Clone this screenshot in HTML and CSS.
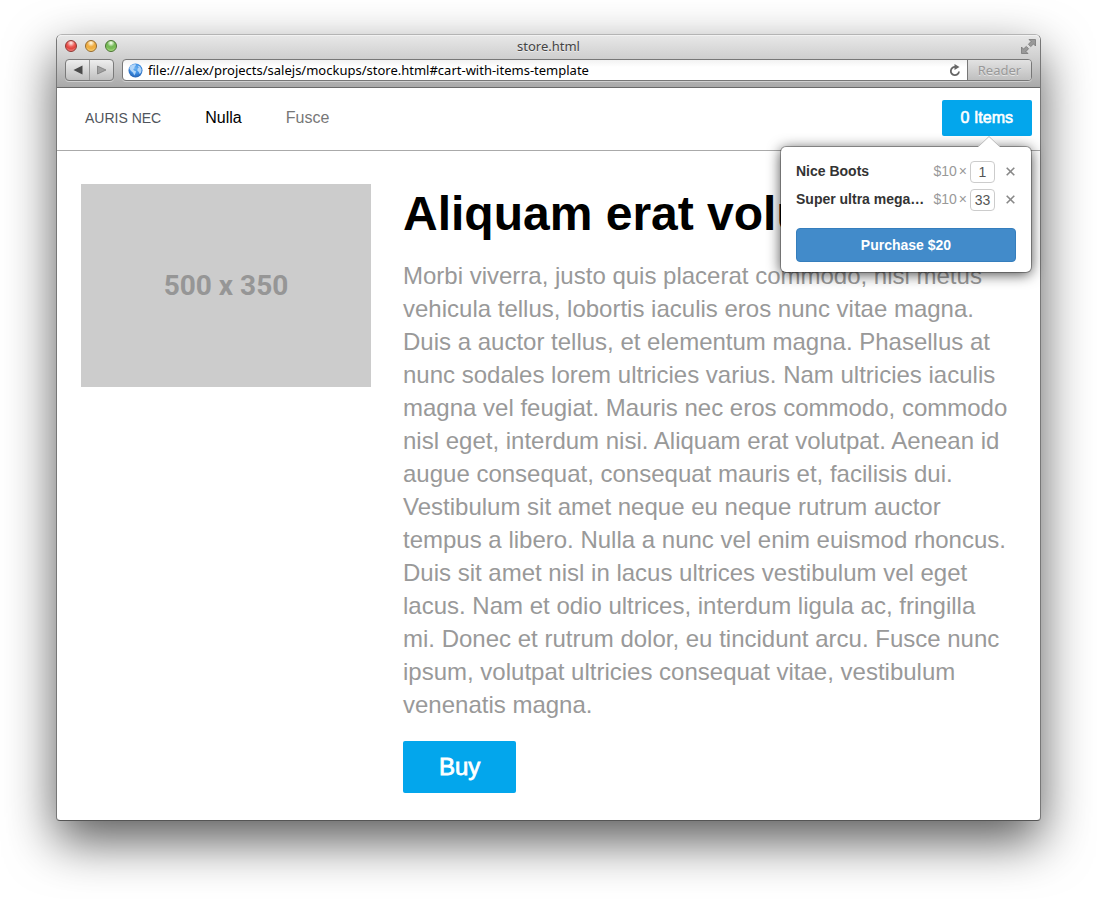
FILE: index.html
```html
<!DOCTYPE html>
<html lang="en">
<head>
<meta charset="utf-8">
<title>store.html</title>
<link rel="stylesheet" href="styles.css">
</head>
<body>
<div class="window">
  <div class="chrome">
    <div class="titlebar">
      <div class="lights">
        <button class="light light-red" aria-label="Close"></button>
        <button class="light light-yellow" aria-label="Minimize"></button>
        <button class="light light-green" aria-label="Zoom"></button>
      </div>
      <div class="window-title">store.html</div>
      <button class="fullscreen" aria-label="Full screen">
        <svg width="15" height="15" viewBox="0 0 15 15"><path d="M8 0.500h6.500v6.500l-2-2L9.700 7.600 7.400 5.300 10 2.500zM7 14.500H0.500V8l2 2L5.300 7.400l2.300 2.300L5 12.500z" fill="#999" stroke="#707070" stroke-width="0.700"/></svg>
      </button>
    </div>
    <div class="toolbar">
      <div class="history">
        <button aria-label="Back"><svg width="10" height="10" viewBox="0 0 10 10"><path d="M0.500 5L9.500 0.500v9z" fill="#4a4a4a"/></svg></button>
        <button aria-label="Forward"><svg width="10" height="10" viewBox="0 0 10 10"><path d="M9 5L0.500 1v8z" fill="#a0a0a0" stroke="#757575" stroke-width="0.700"/></svg></button>
      </div>
      <div class="address">
        <svg class="globe" width="15" height="15" viewBox="0 0 15 15">
          <defs><radialGradient id="sea" cx="50%" cy="35%" r="65%"><stop offset="0" stop-color="#6ab2f2"/><stop offset="0.600" stop-color="#3a8ae0"/><stop offset="1" stop-color="#2560b0"/></radialGradient></defs>
          <circle cx="7.500" cy="7.500" r="7" fill="url(#sea)"/>
          <path d="M2 3.500C4 1 6.500 0.800 8 1.500L7.500 3 6.300 4l.5 1.300-1.600.8.8 1.500 2 .7-.4 1.800-1.300 2.400-1.200-2.700-2.300-2L1.300 5.500zM9.500 2.500l2.500 1 1.600 3-.4 3-1.600 1.500-.8-2-1.500-1.600.3-2 1.200-.7z" fill="#d5ebff" opacity="0.750"/>
        </svg>
        <input class="url" aria-label="Address" value="file:///alex/projects/salejs/mockups/store.html#cart-with-items-template">
        <button class="reload" aria-label="Reload"><svg width="12" height="13" viewBox="0 0 12 13"><path d="M6.500 3A4.100 4.100 0 1 0 10 7.500" fill="none" stroke="#666" stroke-width="1.800"/><path d="M5.500 0l5 3-5 3z" fill="#666"/></svg></button>
        <button class="reader" disabled>Reader</button>
      </div>
    </div>
  </div>
  <header class="site-header">
    <nav class="site-nav">
      <a class="brand" href="#">AURIS NEC</a>
      <a class="current" href="#">Nulla</a>
      <a href="#">Fusce</a>
    </nav>
    <div class="cart">
      <button class="cart-toggle">0 Items</button>
      <div class="popover">
        <svg class="arrow" width="22" height="12" viewBox="0 0 22 12"><path d="M0 11L11 0.500 22 11V12H0z" fill="#fff"/><path d="M0.500 10.500L11 0.500 21.500 10.500" fill="none" stroke="#bbb"/></svg>
        <div class="cart-row">
          <span class="name">Nice Boots</span><span class="price">$10</span><span class="times">×</span>
          <input class="qty" aria-label="Quantity of Nice Boots" value="1">
          <button class="remove" aria-label="Remove Nice Boots"><svg width="9" height="9" viewBox="0 0 9 9"><path d="M0.700 0.700l7.600 7.600M8.300 0.700L0.700 8.300" stroke="#888" stroke-width="1.600"/></svg></button>
        </div>
        <div class="cart-row">
          <span class="name">Super ultra mega…</span><span class="price">$10</span><span class="times">×</span>
          <input class="qty" aria-label="Quantity of Super ultra mega" value="33">
          <button class="remove" aria-label="Remove Super ultra mega"><svg width="9" height="9" viewBox="0 0 9 9"><path d="M0.700 0.700l7.600 7.600M8.300 0.700L0.700 8.300" stroke="#888" stroke-width="1.600"/></svg></button>
        </div>
        <button class="purchase">Purchase $20</button>
      </div>
    </div>
  </header>
  <main class="product">
    <div class="placeholder">500 x 350</div>
    <section class="details">
      <h1>Aliquam erat volutpat</h1>
      <p>Morbi viverra, justo quis placerat commodo, nisl metus vehicula tellus, lobortis iaculis eros nunc vitae magna. Duis a auctor tellus, et elementum magna. Phasellus at nunc sodales lorem ultricies varius. Nam ultricies iaculis magna vel feugiat. Mauris nec eros commodo, commodo nisl eget, interdum nisi. Aliquam erat volutpat. Aenean id augue consequat, consequat mauris et, facilisis dui. Vestibulum sit amet neque eu neque rutrum auctor tempus a libero. Nulla a nunc vel enim euismod rhoncus. Duis sit amet nisl in lacus ultrices vestibulum vel eget lacus. Nam et odio ultrices, interdum ligula ac, fringilla mi. Donec et rutrum dolor, eu tincidunt arcu. Fusce nunc ipsum, volutpat ultricies consequat vitae, vestibulum venenatis magna.</p>
      <button class="buy">Buy</button>
    </section>
  </main>
</div>
</body>
</html>
```
FILE: styles.css
```css
* { box-sizing: border-box; }
body {
  margin: 0;
  padding: 34px 56px 78px;
  background: #fff;
  font-family: "Liberation Sans", Arial, sans-serif;
  overflow: hidden;
}
button, input { font-family: inherit; margin: 0; padding: 0; border: 0; background: none; }
svg { display: block; }
a { text-decoration: none; color: inherit; }

.window {
  border: 1px solid #777;
  border-top-color: #b4b4b4;
  border-bottom-color: #555;
  border-radius: 6px 6px 4px 4px;
  background: #fff;
  box-shadow: 0 20px 50px rgba(0, 0, 0, 0.65);
}

/* Browser chrome */
.chrome {
  height: 53px;
  padding: 0 8px;
  border-bottom: 1px solid #6a6a6a;
  border-radius: 5px 5px 0 0;
  background: linear-gradient(#e8e8e8, #cfcfcf 45%, #a9a9a9);
  box-shadow: inset 0 1px #f2f2f2;
  font-family: "Noto Sans", sans-serif;
}
.titlebar {
  display: grid;
  grid-template-columns: 1fr auto 1fr;
  align-items: center;
  height: 24px;
  padding-bottom: 2px;
}
.lights { display: flex; gap: 8px; }
.light { width: 12px; height: 12px; border-radius: 50%; border: 1px solid; }
.light-red { border-color: #8e3531; background: radial-gradient(circle at 50% 20%, #fbd5d3 0 8%, #ee5c57 40%, #e04540 60%, #ffaaa5); }
.light-yellow { border-color: #96692a; background: radial-gradient(circle at 50% 20%, #fdeecb 0 8%, #efad43 40%, #f0af42 60%, #ffec9c); }
.light-green { border-color: #47722f; background: radial-gradient(circle at 50% 20%, #e4f6d8 0 8%, #74b956 40%, #7abe57 60%, #ccf5a6); }
.window-title { font-size: 13px; line-height: 22px; color: #444; text-shadow: 0 1px #eee; }
.fullscreen { justify-self: end; margin-right: -4px; }
.toolbar { display: flex; gap: 8px; height: 22px; }
.history {
  display: flex;
  width: 49px;
  border: 1px solid #7a7a7a;
  border-radius: 4px;
  background: linear-gradient(#eee, #c0c0c0);
  box-shadow: 0 1px #d0d0d0;
}
.history button { flex: 1; display: grid; place-items: center; }
.history button + button { border-left: 1px solid #999; }
.address {
  flex: 1;
  display: flex;
  align-items: center;
  border: 1px solid #777;
  border-radius: 4px;
  background: linear-gradient(#f2f2f2, #fff 35%);
  box-shadow: 0 1px #d0d0d0;
}
.globe { margin: 0 5px; }
.url { flex: 1; min-width: 0; height: 20px; font-size: 13px; color: #000; outline: 0; }
.reload { margin-right: 6px; }
.reader {
  align-self: stretch;
  width: 64px;
  border-left: 1px solid #777;
  border-radius: 0 3px 3px 0;
  background: linear-gradient(#e2e2e2, #bfbfbf);
  font-size: 13px;
  line-height: 18px;
  color: #999;
  text-shadow: 0 1px #e5e5e5;
}

/* Store page */
.site-header {
  display: flex;
  justify-content: space-between;
  align-items: center;
  height: 63px;
  padding: 0 8px 3px 28px;
  border-bottom: 1px solid #aaa;
}
.site-nav { display: flex; align-items: baseline; gap: 44px; font-size: 16px; line-height: 20px; color: #777; }
.site-nav .brand { font-size: 14px; color: #50555c; }
.site-nav .current { color: #000; }
.cart { position: relative; }
.cart-toggle {
  display: block;
  height: 36px;
  padding: 0 19px;
  border-radius: 2px;
  background: #03a6ec;
  color: #fff;
  font-size: 16px;
  -webkit-text-stroke: 0.6px #fff;
}
.popover {
  position: absolute;
  z-index: 1;
  top: 47px;
  right: 1px;
  width: 250px;
  padding: 14px 15px 10px;
  border-radius: 5px;
  background: #fff;
  box-shadow: 0 0 0 1px rgba(0, 0, 0, 0.3), 0 2px 14px rgba(0, 0, 0, 0.75);
}
.arrow { position: absolute; top: -11px; right: 31px; }
.cart-row { display: flex; align-items: center; height: 22px; margin-bottom: 6px; font-size: 14px; line-height: 16px; color: #999; }
.name { flex: 1; font-weight: bold; color: #333; white-space: nowrap; }
.price { margin-right: 2px; }
.times { margin-right: 3px; }
.name, .price, .times { padding-bottom: 2px; }
.qty {
  width: 25px;
  height: 22px;
  border: 1px solid #ccc;
  border-radius: 4px;
  background: #fff;
  font-size: 14px;
  text-align: center;
  color: #555;
}
.remove { margin: 0 1px 0 11px; }
.purchase {
  display: block;
  width: 100%;
  height: 34px;
  margin-top: 17px;
  border: 1px solid #357ebd;
  border-radius: 4px;
  background: #428bca;
  color: #fff;
  font-size: 14px;
  font-weight: bold;
}
.product {
  display: grid;
  grid-template-columns: 290fr 613fr;
  gap: 32px;
  align-items: start;
  padding: 33px 24px 27px;
}
.placeholder {
  display: grid;
  place-items: center;
  aspect-ratio: 10 / 7;
  background: #ccc;
  color: #969696;
  font-family: Roboto, sans-serif;
  font-size: 28px;
  font-weight: bold;
}
h1 { margin: 0 0 16px; font-size: 48px; line-height: 59px; white-space: nowrap; color: #000; }
.details p { margin: 0 0 20px; padding-right: 4px; font-size: 24px; line-height: 33px; color: #999; }
.buy {
  display: block;
  height: 52px;
  padding: 0 36px;
  border-radius: 2px;
  background: #03a6ec;
  color: #fff;
  font-size: 24px;
  -webkit-text-stroke: 0.8px #fff;
}
```
